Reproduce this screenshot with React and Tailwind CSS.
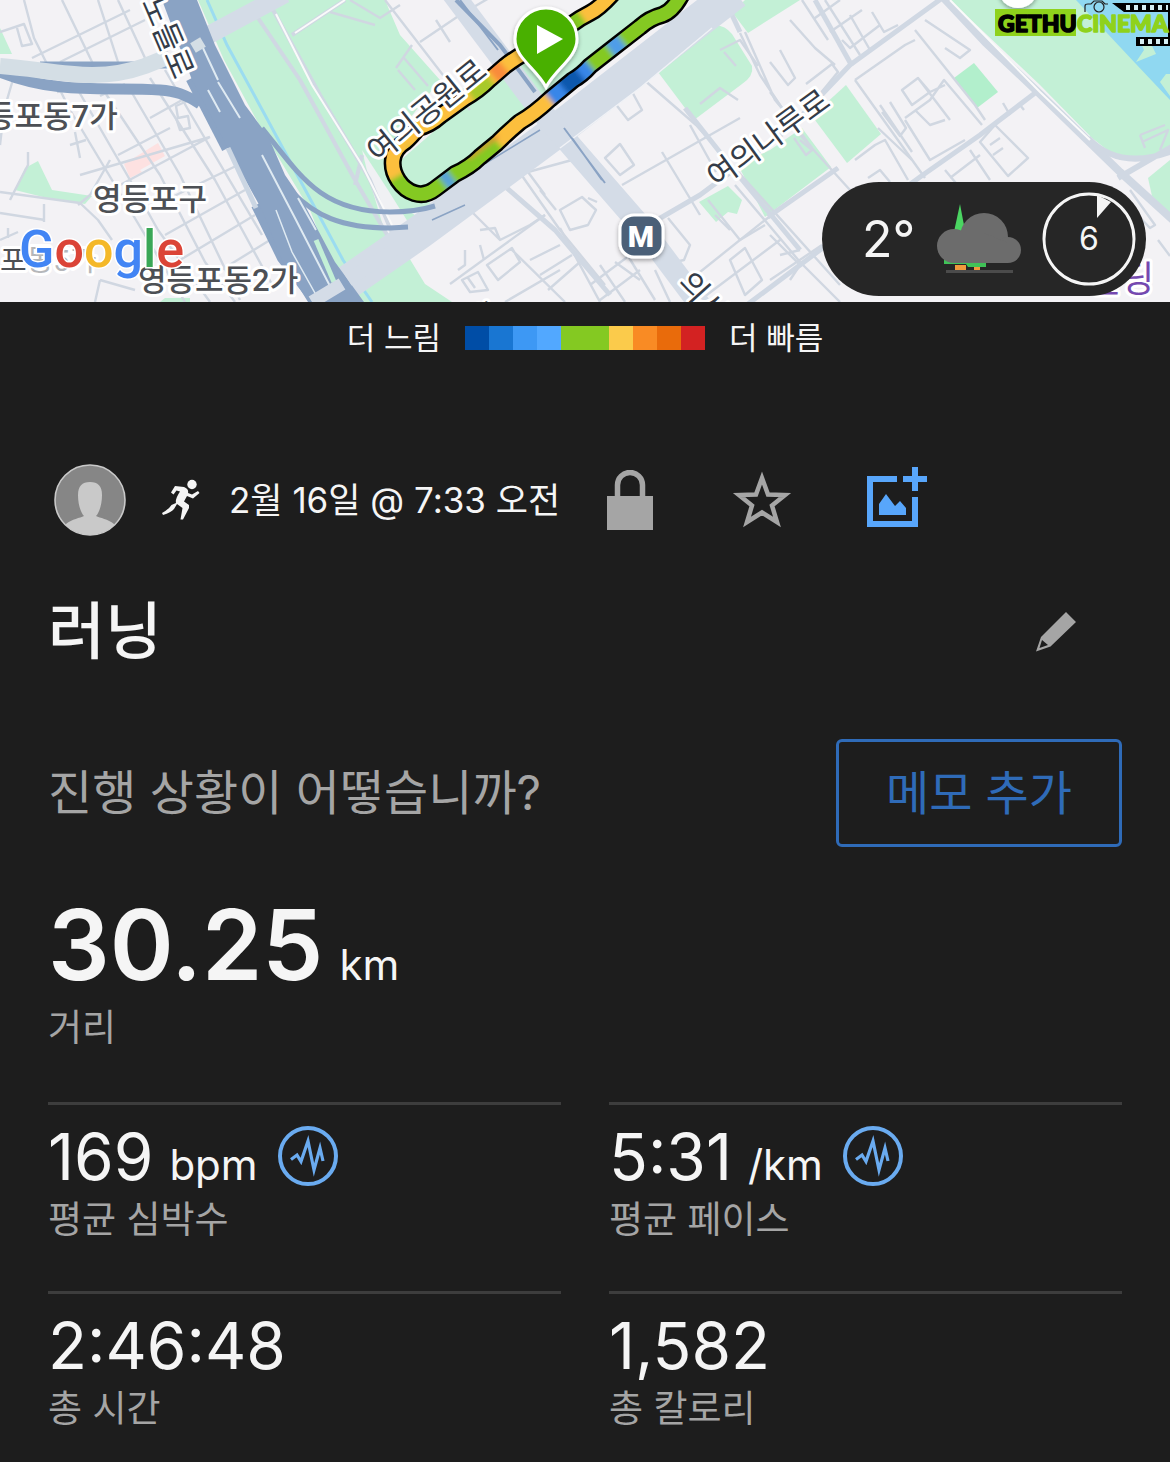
const paceColors = [
  "bg-[#004da6]",
  "bg-[#1976d2]",
  "bg-[#3d98f4]",
  "bg-[#52a8ff]",
  "bg-[#84c922]",
  "bg-[#84c922]",
  "bg-[#fbcb4b]",
  "bg-[#f98b24]",
  "bg-[#e96b0b]",
  "bg-[#d32222]",
];

const stats = [
  { value: "169", unit: "bpm", label: "평균 심박수", chart: true },
  { value: "5:31", unit: "/km", label: "평균 페이스", chart: true },
  { value: "2:46:48", label: "총 시간" },
  { value: "1,582", label: "총 칼로리" },
];

// side streets, drawn thin
const streets = [
  "M24 0L34 38L70 110L130 210L160 260L185 302",
  "M62 0L95 68 M98 0L118 62 M118 0L145 58",
  "M32 58L130 10 M60 62L145 20 M0 32L24 24L32 44L22 46L17 28",
  "M78 90L130 180L158 230L210 302 M102 88L160 175L205 262L235 302",
  "M128 86L180 175L240 300 M150 78L215 180L275 290",
  "M165 70L200 130L262 235",
  "M50 82L95 85L57 92 M100 96L125 84 M150 118L200 90 M118 155L170 128",
  "M80 175L210 137 M120 185L210 137 M135 215L238 165 M165 235L245 190 M180 260L255 215 M205 280L270 240",
  "M194 98L176 106L178 118L188 116L190 128L180 130L176 118",
  "M0 213L45 220 M44 204L44 222 M0 192L80 203L98 220L112 240 M78 205L90 195L110 160",
  "M28 152L28 165L15 190L10 200 M75 132L80 158 M70 145L86 140 M100 280L135 290 M100 280L95 302",
  "M0 145L4 110L14 76 M0 240L18 232 M8 238L8 228",
  "M385 0L470 110 M420 42L460 15L520 -20 M436 20L450 42",
  "M396 68L412 45 M398 70L415 90 M404 58L428 86",
  "M350 0L380 18L400 5 M330 12L375 25",
  "M518 170L560 230L605 285 M545 195L528 172L572 160 M540 190L556 210",
  "M560 210L582 197L596 210L588 225L570 230Z M588 198L597 202",
  "M470 210L500 240L530 225L545 215 M480 230L495 228L500 240",
  "M450 284L545 215",
  "M510 248L565 302 M487 265L512 248L520 262L498 280Z M530 260L560 245 M540 275L572 255 M548 290L580 262 M505 302L560 270",
  "M465 250L465 265L458 270 M480 245L484 260 M462 280L478 272L488 290L470 292Z M468 278L475 288",
  "M560 228L600 302 M590 285L650 240 M600 265L625 302 M615 262L640 280 M628 256L655 300 M600 300L640 270 M655 270L670 302",
  "M605 158L620 144L634 165L620 175Z M614 102L628 120L642 110L630 88",
  "M635 72L696 125L840 285 M690 125L716 172 M662 152L700 215 M622 185L740 118",
  "M668 218L690 245L684 260L675 262 M708 200L740 240L765 225 M715 215L730 230 M730 260L745 248L762 280L745 295Z",
  "M690 280L765 220L838 168 M700 300L780 240 M735 185L800 262L840 302",
  "M720 50L740 40L758 66 M700 104L720 88L738 100 M724 52L736 66",
  "M740 33L760 75L800 135L850 190 M745 32L775 100L790 118",
  "M770 62L788 85L795 78L780 50 M815 100L838 72L832 64L806 84",
  "M770 92L812 148 M800 140L812 150L806 155L794 138",
  "M790 20L815 48L835 65 M802 0L828 40 M825 0L860 55 M815 18L840 0 M830 32L862 10",
  "M842 40L850 48L880 25 M850 15L870 50 M872 12L884 32L898 25",
  "M855 80L905 45L915 40 M855 80L925 178 M915 30L975 105L985 120 M925 20L970 50L960 58L945 48",
  "M902 90L918 78L930 92L912 105Z M918 78L950 120 M905 118L930 100L944 80L982 125 M930 92L945 85",
  "M905 120L930 160L965 140 M915 110L930 125L945 120",
  "M880 105L912 152 M890 102L906 128L900 136L882 112 M878 128L912 160",
  "M855 160L875 145L885 140L908 180 M868 178L880 170L890 182",
  "M980 142L995 125L1028 158L1008 176Z M993 155L1003 148 M990 145L1000 138",
  "M970 150L990 180 M945 170L960 188 M950 178L980 155 M1003 103L1010 115 M1020 105L1024 110",
  "M1140 135L1165 125 M1142 142L1168 130L1160 150 M1140 135L1145 148",
  "M1130 190L1155 225L1150 228L1128 205 M1158 240L1170 256",
  "M770 235L800 265L790 280 M780 255L800 250 M770 280L822 245",
];

const roads = [
  "M657 220L700 195L790 128L850 65L945 -4",
  "M740 310L820 250L920 177L980 135L1035 93",
  "M815 0L852 66",
  "M768 217L838 168",
  "M500 182L555 230L610 295",
  "M685 108L730 165L800 250",
  "M725 0L740 32",
];

// every stretch of the route carries its own pace colour
const routeShade = [
  ["M620 -8L590 13L576 20", "#fcbf3d"],
  ["M582 17L572 24L560 32", "#84c922"],
  ["M530 50L505 66L490 79", "#fcbf3d"],
  ["M504 67L493 76", "#f98b3a"],
  ["M490 79L465 98L445 113", "#a8c92a"],
  ["M470 95L440 116L418 128L405 142", "#fcbf3d"],
  ["M405 142C388 154 390 165 398 178", "#fcbf3d"],
  ["M398 176C407 192 420 198 435 189", "#84c922"],
  ["M435 189L455 174L497 143", "#84c922"],
  ["M443 182L451 176", "#57a3d9"],
  ["M497 141L515 126L550 99", "#fcbf3d"],
  ["M468 158L498 136", "#f07a3a", 3],
  ["M550 99L573 80L590 66", "#3986e8"],
  ["M563 88L580 74", "#0d59ae"],
  ["M590 66L605 54L613 48", "#84c922"],
  ["M610 50L622 41", "#4f9de8"],
  ["M622 41L640 27L662 15L686 -8", "#84c922"],
];

const routePath =
  "M614 -8Q600 8 590 13Q580 18 572 24L530 50Q515 58 505 66L490 79Q478 91 465 98L440 116Q430 125 418 128Q411 137 405 142C374 161 408 210 435 189L455 174Q470 167 480 157L497 143Q508 132 520 122Q534 114 550 99L573 80Q582 75 590 66L613 48L640 27Q650 18 662 15Q674 11 684 -10";

const mapLabels = [
  { text: "등포동7가", x: -14, y: 127 },
  { text: "영등포구", x: 93, y: 210 },
  { text: "영등포동2가", x: 138, y: 291 },
];

function MapView() {
  return (
    <svg
      viewBox="0 0 1170 302"
      preserveAspectRatio="xMidYMid slice"
      className="block w-full font-['Roboto','Noto_Sans_CJK_KR',sans-serif]"
      role="img"
      aria-label="지도"
    >
      <defs>
        <filter id="blend" x="-5%" y="-5%" width="110%" height="110%">
          <feGaussianBlur stdDeviation="2.5" />
        </filter>
        <filter id="drop" x="-30%" y="-30%" width="160%" height="160%">
          <feDropShadow dx="0" dy="2" stdDeviation="2" floodOpacity="0.35" />
        </filter>
        <mask id="route-core" maskUnits="userSpaceOnUse" x="0" y="0" width="1170" height="302">
          <path d={routePath} fill="none" stroke="#fff" strokeWidth="13" strokeLinejoin="round" />
        </mask>
      </defs>

      <rect width="1170" height="302" fill="#f3f2f5" />

      {/* parks and water */}
      <g fill="#c3f0d6">
        <path d="M198 0H385L400 35L440 80L385 150L388 180L410 212L440 230L345 302L310 210L262 130L224 60Z" />
        <path d="M382 302L335 302L395 257L408 256L425 284L452 302Z" />
        <path d="M394 166L470 100L560 22L620 -4H680L640 25L520 120L420 196Z" />
        <path d="M385 185L400 215L432 205L410 180Z" />
        <path d="M655 68L708 27Q722 22 732 34L752 66Q754 76 742 84L694 120Z" />
        <path d="M732 12L745 0H800L748 33Z" />
        <path d="M699 202L728 186L742 200L737 214L728 212L716 222Z" />
        <path d="M738 165L770 150L802 128L831 167L765 217Z" />
        <path d="M812 116L846 85L881 134L847 163Z" />
        <path d="M954 78L974 63L998 92L977 108Z" fill="#b2efcc" />
        <path d="M950 0H1170V145L1150 160H1120L1092 138L1040 85Z" />
        <path d="M1148 178L1170 160V215L1152 196Z" />
        <path d="M0 28L12 54H0Z M15 190L25 168L38 161L52 190L92 196L85 204L55 200Z M165 298L190 298V302H160Z" />
      </g>
      <path d="M124 164L158 143L165 156L140 170L142 172L130 178Z" fill="#fde1e1" />
      <path d="M1076 0H1170V100L1136 64Z" fill="#90d8f1" />
      <path d="M1136 62L1144 50L1138 36L1152 46L1156 54L1146 58Z M1160 82L1166 74H1170V96Z" fill="#c3f0d6" />
      <path d="M362 150L388 190L408 222L386 236L368 175Z" fill="#f0f1f4" />
      <path d="M207 0L227 45L265 115L300 180L343 260L372 302" fill="none" stroke="#9bdcf0" strokeWidth="3" />

      {/* streets */}
      <g fill="none" stroke="#d0d7e1" strokeWidth="2.4" strokeLinejoin="round">
        {streets.map((d) => (
          <path key={d} d={d} />
        ))}
      </g>
      <g fill="none" stroke="#d0d8e3" strokeWidth="5" strokeLinejoin="round">
        {roads.map((d) => (
          <path key={d} d={d} />
        ))}
        <path d="M940 -6L985 42L1040 94L1120 172L1175 222" strokeWidth="8" />
        <path d="M1088 138Q1120 172 1175 150 M1118 178L1175 145" strokeWidth="6" />
        <path
          d="M272 8L320 95L370 180L395 240 M258 18L300 80L355 180L390 240 M292 35L345 0 M362 155L355 185"
          strokeWidth="4"
        />
      </g>
      <g fill="none" stroke="#fafafa" strokeWidth="2">
        <path d="M276 14L312 85L362 165L392 225 M295 33L345 0 M950 0L1040 92L1090 140" />
      </g>

      {/* wide avenues */}
      <g fill="none" stroke="#d4dce7">
        <path d="M345 284L420 232L550 136L735 -8" strokeWidth="34" />
        <path d="M205 37L285 -6" strokeWidth="18" />
        <path d="M450 -10L540 110L640 225L700 305" strokeWidth="22" />
      </g>
      <path d="M560 148L640 88L712 28" fill="none" stroke="#f0f2f6" strokeWidth="1.5" />

      {/* expressway with its ramps */}
      <g fill="none" stroke="#8aa3c4">
        <path d="M0 72C60 96 110 86 160 90C175 91 185 94 200 104" strokeWidth="11" />
        <path d="M40 65H180" strokeWidth="7" />
        <path d="M262 128C300 175 320 212 390 212Q415 212 435 206" strokeWidth="5" />
        <path d="M292 192C315 215 340 228 390 228L408 227" strokeWidth="5" />
        <path d="M192 78L228 148" strokeWidth="13" />
        <path d="M256 205L282 258L316 302" strokeWidth="10" />
        <path d="M456 0L500 45L535 92" strokeWidth="4" />
        <path d="M460 0L498 50 M564 128L605 183 M572 138L602 180" strokeWidth="2" />
        <path d="M432 220L465 205 M455 182L540 130" strokeWidth="1.5" />
      </g>
      <path
        d="M162 0H197L215 45L245 105L268 136L285 175L302 200L335 262L364 302H308L282 260L262 210L230 152L192 80Z"
        fill="#8aa3c4"
      />
      <path d="M299 197L318 232L336 268L352 292L348 302L336 302L318 262Z" fill="#8aa3c4" />
      <g fill="none" stroke="#dfeaf2" strokeWidth="2">
        <path d="M203 48L218 80 M262 155L296 220L332 290 M218 82L240 118 M298 198L316 230 M208 90L220 112" />
        <path d="M276 210L292 252L320 302" strokeWidth="1.5" />
      </g>
      <path d="M316 240L334 282" stroke="#c3f0d6" strokeWidth="5" />
      <path d="M0 66C55 70 95 84 145 66L170 56" fill="none" stroke="#d4dee5" strokeWidth="16" />
      <path d="M193 48L203 42" stroke="#d4dee5" strokeWidth="11" />
      <path d="M228 148L256 208" fill="none" stroke="#cbd6e3" strokeWidth="5" />
      <path d="M312 302L342 284 M348 280L400 246" fill="none" stroke="#d4dce7" strokeWidth="13" />

      {/* place names */}
      <g fill="#4d5055" stroke="#fff" strokeWidth="6" strokeLinejoin="round" paintOrder="stroke" fontSize="31">
        {mapLabels.map(({ text, x, y }) => (
          <text key={text} x={x} y={y} fontWeight="500">
            {text}
          </text>
        ))}
        <text x="0" y="271" fontSize="29">
          포
          <tspan fill="#b5b7ba">동5가</tspan>
        </text>
        <text x="1088" y="292" fontSize="36" fill="#7549b0">
          빌딩
        </text>
      </g>

      {/* route */}
      <path d={routePath} fill="none" stroke="#000" strokeWidth="18" strokeLinejoin="round" />
      <g mask="url(#route-core)">
        <path d={routePath} fill="none" stroke="#a8c92a" strokeWidth="18" />
        <g fill="none" filter="url(#blend)">
          {routeShade.map(([d, color, width = 22]) => (
            <path key={d} d={d} stroke={color} strokeWidth={width} />
          ))}
        </g>
      </g>

      {/* road names */}
      <g fill="#343c48" stroke="#fff" strokeWidth="6" strokeLinejoin="round" paintOrder="stroke" fontSize="31">
        <text transform="translate(378 164) rotate(-39)">여의공원로</text>
        <text transform="translate(717 189) rotate(-36)">여의나루로</text>
        <text transform="translate(141 2) rotate(67)">노들로</text>
        <text transform="translate(676 284) rotate(48)">의사당대로</text>
        <text transform="translate(472 324) rotate(-10)" fontSize="24">의</text>
      </g>

      {/* start pin */}
      <path
        d="M546 87C536 68 515 58 515 39A31 31 0 0 1 577 39C577 58 556 68 546 87Z"
        fill="#48b000"
        stroke="#fff"
        strokeWidth="3"
        filter="url(#drop)"
      />
      <path d="M537 25L563 39L537 54Z" fill="#fff" />

      {/* metro */}
      <rect x="620" y="215" width="43" height="42" rx="14" fill="#4b6178" stroke="#fff" strokeWidth="3" filter="url(#drop)" />
      <text x="641" y="247" textAnchor="middle" fontSize="30" fontWeight="900" fill="#fff">
        M
      </text>

      <circle cx="1018" cy="-12" r="20" fill="#fff" filter="url(#drop)" />

      {/* Google */}
      <text x="19" y="267" fontSize="52" fontWeight="500" stroke="#fff" strokeWidth="3" paintOrder="stroke">
        <tspan fill="#4285f4">G</tspan>
        <tspan fill="#db4437">o</tspan>
        <tspan fill="#f4b829">o</tspan>
        <tspan fill="#4285f4">g</tspan>
        <tspan fill="#3aa757">l</tspan>
        <tspan fill="#db4437">e</tspan>
      </text>

      {/* watermark */}
      <rect x="995" y="9" width="81" height="27" fill="#8fd21c" />
      <g fill="none" stroke="#222" strokeWidth="1.2">
        <path d="M1085 12V6Q1085 4 1088 4H1091L1094 1H1102L1105 4H1108" />
        <circle cx="1099" cy="7" r="5" />
      </g>
      <path d="M1112 3H1170V12H1124Z M1136 37H1170V46H1136Z M1168 3H1170V46H1168Z" fill="#000" />
      <path d="M1126 7.5H1168" stroke="#d6eef2" strokeWidth="5" strokeDasharray="4 4" />
      <path d="M1140 41.5H1168" stroke="#d6eef2" strokeWidth="5" strokeDasharray="4 4" />
      <g className="font-['Lato',sans-serif]" fontSize="23" fontWeight="900" strokeWidth="1.6" strokeLinejoin="round">
        <text x="998" y="32" fill="#000" stroke="#000">
          GETHU
        </text>
        <text x="1077" y="32" fill="#8fd21c" stroke="#8fd21c">
          CINEMA
        </text>
      </g>
    </svg>
  );
}

function WeatherIcon() {
  return (
    <svg viewBox="0 0 86 72" className="h-[72px] w-[86px]" aria-hidden="true">
      <path d="M24 1L31 38H16Z" fill="#4bd562" />
      <path d="M8 56H50V64H32L30 61H8Z" fill="#3fc257" />
      <path d="M19 62H30V67H19Z M38 64H44V67H38Z" fill="#f09a3c" />
      <path d="M10 68.500H77" stroke="#4b4b4b" strokeWidth="3" />
      <g fill="#6c6c6c">
        <circle cx="18" cy="43" r="17" />
        <circle cx="48" cy="34" r="24" />
        <circle cx="72" cy="47" r="13" />
        <path d="M18 30H48L72 40V60H18Z" />
      </g>
    </svg>
  );
}

function WindDial({ speed }) {
  return (
    <div className="grid size-[94px] place-items-center">
      <svg viewBox="0 0 94 94" className="col-start-1 row-start-1 size-[94px]" aria-hidden="true">
        <circle cx="47" cy="47" r="45" fill="none" stroke="#f5f5f5" strokeWidth="3" />
        <path d="M55 3V26L69 10Z" fill="#f5f5f5" />
      </svg>
      <span className="col-start-1 row-start-1 text-[32px] leading-10">{speed}</span>
    </div>
  );
}

function Runner() {
  return (
    <svg viewBox="0 0 38 42" className="h-[42px] w-[38px]" aria-hidden="true">
      <circle cx="30" cy="5.500" r="4.700" fill="#f5f5f5" />
      <path
        d="M13 7L22 8Q27 10 26 14L30 15.500L36 12L37.500 14L31 19.500L25 17L22 22.500L27 26V29L21 40.500H18.500L20.500 29L15 25L12 30Q9 33.500 1 36L0 34Q7 30 9.500 26L14 24Q13 20 18 12.500L14.500 11.500L11.500 15.500L9 13.500Z"
        fill="#f5f5f5"
      />
    </svg>
  );
}

function Avatar() {
  return (
    <svg viewBox="0 0 72 72" className="size-[72px]" aria-hidden="true">
      <clipPath id="avatar">
        <circle cx="36" cy="36" r="35" />
      </clipPath>
      <g clipPath="url(#avatar)">
        <rect width="72" height="72" fill="#868686" />
        <path
          d="M36 18C44 18 48 22 48 31C48 41 45 49 42 52C46 54 54 55 60 60L66 72H6L12 60C18 55 26 54 30 52C27 49 24 41 24 31C24 22 28 18 36 18Z"
          fill="#c9c9c9"
        />
      </g>
      <circle cx="36" cy="36" r="35" fill="none" stroke="#c9c9c9" strokeWidth="1.600" />
    </svg>
  );
}

function ChartBadge() {
  return (
    <svg viewBox="0 0 60 60" className="size-[60px]" aria-hidden="true">
      <circle cx="30" cy="30" r="28" fill="none" stroke="#6aabf0" strokeWidth="4" />
      <path
        d="M13 33.500L19 29L23 35.500L30 15L36 44L42 22L45 35"
        fill="none"
        stroke="#6aabf0"
        strokeWidth="3.200"
        strokeMiterlimit="6"
      />
    </svg>
  );
}

function Stat({ value, unit, label, chart }) {
  return (
    <div className="h-[189px] border-t-3 border-[#3d3d3d] pt-[21px]">
      <div className="flex h-[66px] items-start gap-5">
        <p className="text-[64px] leading-[62px]">
          {value}
          {unit && <span className="ml-4 text-[42px] leading-none">{unit}</span>}
        </p>
        {chart && (
          <button type="button" aria-label={`${label} 차트`}>
            <ChartBadge />
          </button>
        )}
      </div>
      <p className="text-[37px] leading-[56px] text-[#a5a5a5]">{label}</p>
    </div>
  );
}

export default function App() {
  return (
    <div className="min-h-screen bg-[#1d1d1d] text-[#f5f5f5] font-['Inter','Noto_Sans_CJK_KR',sans-serif]">
      <div className="relative">
        <MapView />
        <div className="absolute right-6 bottom-[6px] flex h-[114px] w-[324px] items-center justify-between rounded-full bg-[#262626] pr-[10px] pl-10">
          <span className="text-[50px] leading-[60px]">2°</span>
          <WeatherIcon />
          <WindDial speed={6} />
        </div>
      </div>

      {/* Pace legend */}
      <div className="flex h-[72px] items-center justify-center gap-6 text-[31px]">
        <span>더 느림</span>
        <div className="flex">
          {paceColors.map((color, i) => (
            <span key={i} className={`size-6 ${color}`} />
          ))}
        </div>
        <span>더 빠름</span>
      </div>

      <main className="px-12">
        {/* Activity header */}
        <header className="mt-[84px] flex h-[84px] items-center pl-[6px]">
          <Avatar />
          <div className="ml-9">
            <Runner />
          </div>
          <p className="ml-[29px] text-[35px] leading-[48px]">2월 16일 @ 7:33 오전</p>
          <button type="button" aria-label="비공개" className="ml-[46px]">
            <svg viewBox="0 0 48 60" className="h-[60px] w-12">
              <path d="M1 26H47V60H1Z" fill="#a5a5a5" />
              <path d="M11.500 27V15A12.500 12.500 0 0 1 36.500 15V27" fill="none" stroke="#a5a5a5" strokeWidth="5.500" />
            </svg>
          </button>
          <button type="button" aria-label="즐겨찾기" className="ml-[78px]">
            <svg viewBox="0 0 60 60" className="size-[60px]">
              <path
                d="M30 8L36 24.500L53 25L40 35.500L45 52L30 42.500L15 52L20 35.500L7 25L24 24.500Z"
                fill="none"
                stroke="#a5a5a5"
                strokeWidth="4.500"
                strokeMiterlimit="8"
              />
            </svg>
          </button>
          <button type="button" aria-label="사진 추가" className="mb-[6px] ml-[74px]">
            <svg viewBox="0 0 62 62" className="size-[62px]" fill="#58a6fb">
              <path d="M1 10H31V16H7V55H46V31H52V61H1Z" />
              <path d="M46 1H52V10H61V16H52V25H46V16H37V10H46Z" />
              <path d="M13 49V38L20 28L29 40L34 35L40 42V49Z" />
            </svg>
          </button>
        </header>

        <div className="mt-[42px] flex h-[96px] items-center justify-between">
          <h1 className="text-[62px] leading-[90px] font-medium">러닝</h1>
          <button type="button" aria-label="이름 편집" className="mr-[45px]">
            <svg viewBox="0 0 42 42" className="size-[42px]">
              <path
                fillRule="evenodd"
                fill="#a5a5a5"
                d="M31 1L41 11L15.500 35.500L1 40.500L6 26ZM7 29L4.500 37L13 34Z"
              />
            </svg>
          </button>
        </div>

        {/* Notes */}
        <div className="mt-[59px] flex items-center justify-between">
          <p className="text-[48px] leading-[72px] text-[#a5a5a5]">진행 상황이 어떻습니까?</p>
          <button
            type="button"
            className="h-[108px] w-[286px] rounded-md border-3 border-[#2f6bb8] text-[47px] text-[#2f6bb8]"
          >
            메모 추가
          </button>
        </div>

        {/* Distance */}
        <section className="mt-[49px] h-[206px]">
          <p className="text-[97px] leading-[98px] font-semibold">
            30.25<span className="ml-4 text-[42px] leading-none font-normal">km</span>
          </p>
          <p className="mt-[6px] text-[37px] leading-[56px] text-[#a5a5a5]">거리</p>
        </section>

        <section className="grid grid-cols-2 gap-x-12">
          {stats.map((s) => (
            <Stat key={s.label} {...s} />
          ))}
        </section>
      </main>
    </div>
  );
}
